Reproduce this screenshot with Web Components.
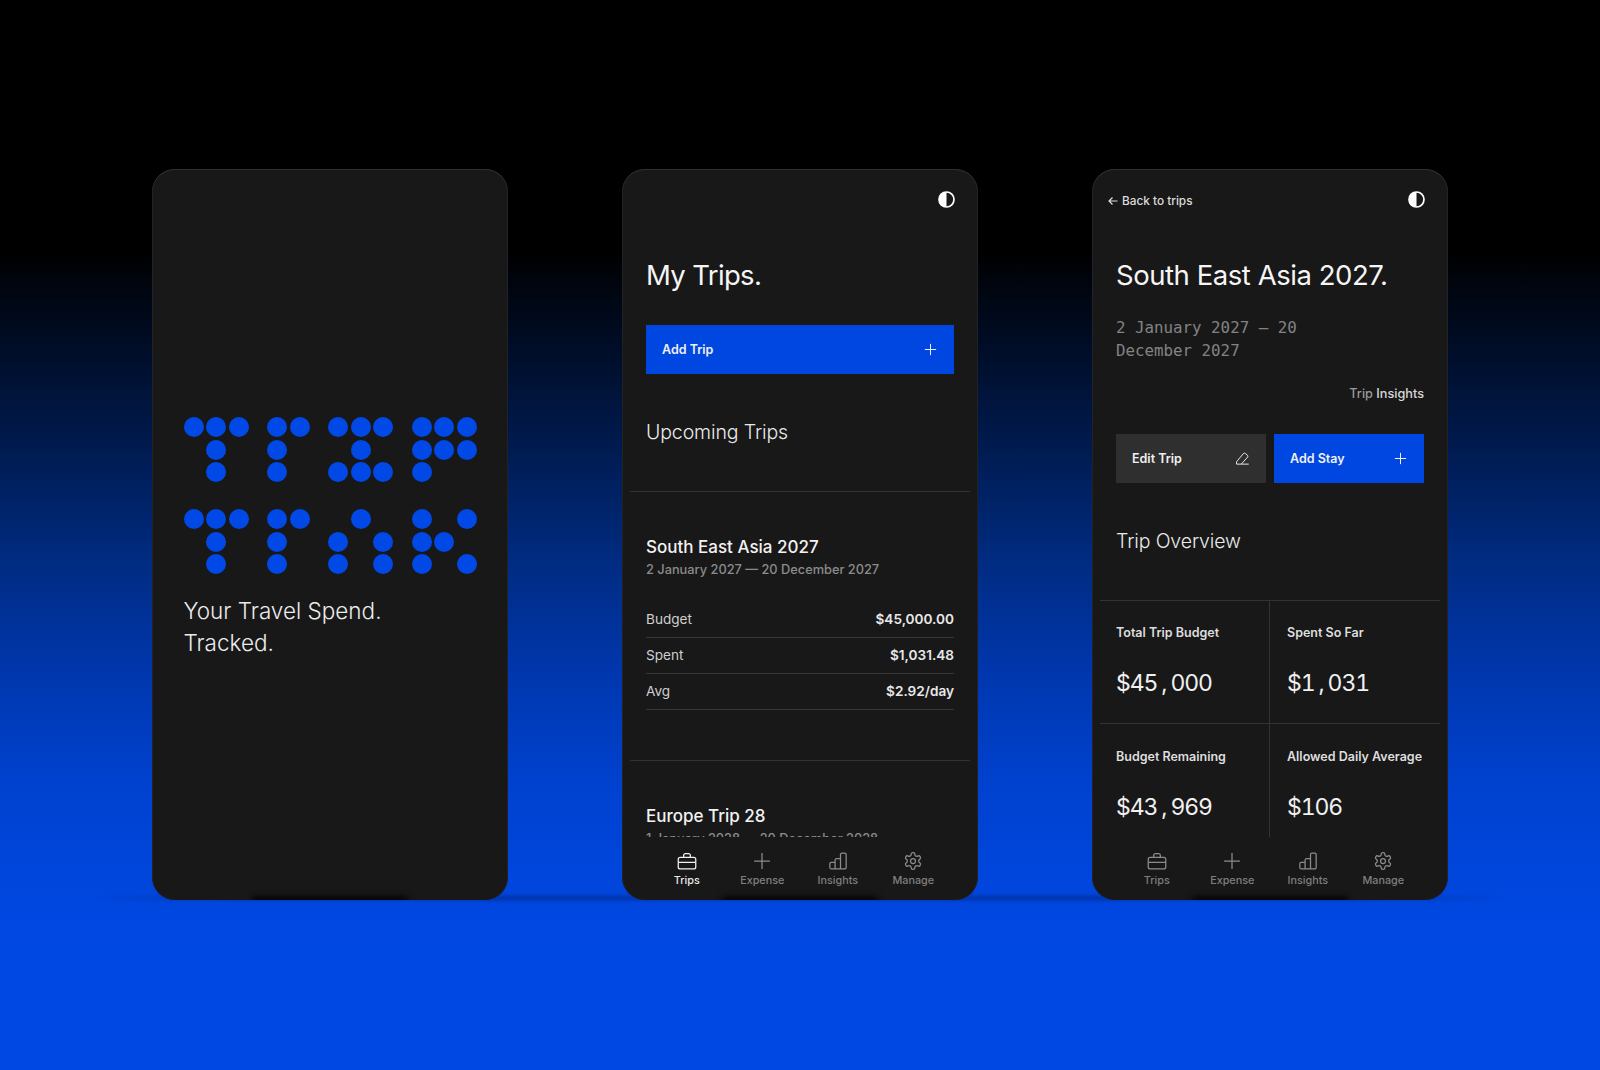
<!DOCTYPE html>
<html lang="en">
<head>
<meta charset="utf-8">
<title>Trip Trak</title>
<style>
  html, body { margin: 0; height: 100%; }
  body {
    height: 1070px;
    overflow: hidden;
    font-family: Inter, "Liberation Sans", sans-serif;
    color: #f2f2f2;
    background: linear-gradient(180deg, #000 0, #000 250px, #001a4e 444px, #002b80 559px, #0037ae 674px, #0042d0 789px, #0047e0 903px, #0048e4 1000px, #0048e4 100%);
  }
</style>
</head>
<body>
<phone-stage>
  <trip-phone>
    <splash-screen></splash-screen>
  </trip-phone>

  <trip-phone>
    <top-bar slot="top"></top-bar>
    <page-title style="letter-spacing:-.65px">My Trips.</page-title>
    <action-button full style="margin-top:33.500px">Add Trip</action-button>
    <section-title>Upcoming Trips</section-title>
    <trip-card name="South East Asia 2027" dates="2 January 2027 — 20 December 2027">
      <budget-row label="Budget" value="$45,000.00"></budget-row>
      <budget-row label="Spent" value="$1,031.48"></budget-row>
      <budget-row label="Avg" value="$2.92/day"></budget-row>
    </trip-card>
    <trip-card name="Europe Trip 28" dates="1 January 2028 — 20 December 2028"></trip-card>
    <bottom-nav slot="nav" active="Trips"></bottom-nav>
  </trip-phone>

  <trip-phone>
    <top-bar slot="top" back></top-bar>
    <page-title>South East Asia 2027.</page-title>
    <trip-dates>2 January 2027 — 20 December 2027</trip-dates>
    <insights-link></insights-link>
    <button-pair>
      <action-button variant="edit" icon="edit">Edit Trip</action-button>
      <action-button>Add Stay</action-button>
    </button-pair>
    <section-title>Trip Overview</section-title>
    <stat-grid>
      <stat-cell label="Total Trip Budget"><span>$45<i>,</i>000</span></stat-cell>
      <stat-cell label="Spent So Far"><span>$1<i>,</i>031</span></stat-cell>
      <stat-cell label="Budget Remaining"><span>$43<i>,</i>969</span></stat-cell>
      <stat-cell label="Allowed Daily Average"><span>$106</span></stat-cell>
    </stat-grid>
    <bottom-nav slot="nav"></bottom-nav>
  </trip-phone>
</phone-stage>

<script>
const ICONS = {
  Trips: `<rect x="1.500" y="7.500" width="21" height="14" rx="2.400"/><path d="M8 7.500V5.200A2 2 0 0 1 10 3.200h4a2 2 0 0 1 2 2v2.300M1.500 13.500h21"/>`,
  Expense: `<path d="M12 2.500v19M2.500 12h19"/>`,
  Insights: `<path d="M8.500 21.500H4a1.800 1.800 0 0 1-1.800-1.800v-4.400A1.800 1.800 0 0 1 4 13.500h4.500zM8.500 21.500V11a1.800 1.800 0 0 1 1.800-1.800h4.700v12.300zM15 21.500h5a1.800 1.800 0 0 0 1.800-1.800V4.300A1.800 1.800 0 0 0 20 2.500h-3.200A1.800 1.800 0 0 0 15 4.300z"/>`,
  Manage: `<path d="M12.220 2h-.44a2 2 0 0 0-2 2v.18a2 2 0 0 1-1 1.730l-.43.25a2 2 0 0 1-2 0l-.15-.08a2 2 0 0 0-2.730.73l-.22.38a2 2 0 0 0 .73 2.730l.15.1a2 2 0 0 1 1 1.720v.51a2 2 0 0 1-1 1.740l-.15.09a2 2 0 0 0-.73 2.730l.22.38a2 2 0 0 0 2.730.73l.15-.08a2 2 0 0 1 2 0l.43.25a2 2 0 0 1 1 1.730V20a2 2 0 0 0 2 2h.44a2 2 0 0 0 2-2v-.18a2 2 0 0 1 1-1.730l.43-.25a2 2 0 0 1 2 0l.15.08a2 2 0 0 0 2.730-.73l.22-.39a2 2 0 0 0-.73-2.730l-.15-.08a2 2 0 0 1-1-1.740v-.5a2 2 0 0 1 1-1.740l.15-.09a2 2 0 0 0 .73-2.730l-.22-.38a2 2 0 0 0-2.730-.73l-.15.08a2 2 0 0 1-2 0l-.43-.25a2 2 0 0 1-1-1.730V4a2 2 0 0 0-2-2z"/><circle cx="12" cy="12" r="3"/>`,
  plus: `<path d="M12 3v18M3 12h18"/>`,
  edit: `<path d="M2.500 21v-3.800L13.500 4a2 2 0 0 1 2.800-.2l3.700 3.100a2 2 0 0 1 .2 2.800L10 21zM10 21h12"/>`
};

class PhoneStage extends HTMLElement {
  constructor() {
    super();
    this.attachShadow({ mode: "open" }).innerHTML = `<style>
      :host { display: flex; justify-content: center; gap: 114px; padding-top: 169px; position: relative; }
      :host::before {
        content: ""; position: absolute; left: 90px; right: 90px; top: 896px; height: 4px;
        background: linear-gradient(90deg, transparent, rgba(0,10,50,.4) 12%, rgba(0,10,50,.4) 88%, transparent);
        filter: blur(2px);
      }
    </style><slot></slot>`;
  }
}

class TripPhone extends HTMLElement {
  constructor() {
    super();
    this.attachShadow({ mode: "open" }).innerHTML = `<style>
      :host {
        display: flex; flex-direction: column; position: relative; overflow: hidden;
        width: 356px; height: 731px; box-sizing: border-box;
        background: #181818; border-radius: 23px;
        box-shadow: inset 0 1px 0 #303030, inset 1px 0 0 #222, inset -1px 0 0 #222;
      }
      :host::after {
        content: ""; position: absolute; z-index: 2; left: 28%; right: 28%; bottom: -3px; height: 6px;
        background: #000; filter: blur(3px);
      }
      .body { flex: 1; min-height: 0; overflow: hidden; display: flex; flex-direction: column; }
    </style>
    <slot name="top"></slot>
    <div class="body"><slot></slot></div>
    <slot name="nav"></slot>`;
  }
}

class SplashScreen extends HTMLElement {
  constructor() {
    super();
    const letters = [
      [["111","010","010"], ["11","10","10"], ["111","010","111"], ["111","111","100"]],
      [["111","010","010"], ["11","10","10"], ["010","101","101"], ["101","110","101"]]
    ];
    const word = (rows) => rows.map((r) => `<div class="letter">${r.join("").split("").map((d) =>
      `<b class="${d === "1" ? "on" : ""}"></b>`).join("")}</div>`).join("");
    this.attachShadow({ mode: "open" }).innerHTML = `<style>
      :host { display: block; padding: 248px 0 0 31.500px; }
      .word { display: flex; gap: 16px; margin-bottom: 24.500px; }
      .letter { display: grid; grid-template-columns: repeat(auto-fill, 22.500px); grid-auto-rows: 22.500px; }
      .letter:nth-child(1), .letter:nth-child(3), .letter:nth-child(4) { width: 67.500px; }
      .letter:nth-child(2) { width: 45px; }
      b { display: block; width: 20px; height: 20px; border-radius: 50%; }
      b.on { background: #0049e6; }
      p { margin: -6px 0 0; font-size: 22.500px; line-height: 31.500px; font-weight: 300; color: #ececec; }
    </style>
    ${letters.map((w) => `<div class="word">${word(w)}</div>`).join("")}
    <p>Your Travel Spend.<br>Tracked.</p>`;
  }
}

class TopBar extends HTMLElement {
  constructor() {
    super();
    const back = this.hasAttribute("back");
    this.attachShadow({ mode: "open" }).innerHTML = `<style>
      :host { display: flex; align-items: center; justify-content: space-between; height: 61px; padding: 1px 23px 0 16px; flex: none; }
      a { display: flex; align-items: center; gap: 4px; font-size: 11.800px; font-weight: 500; color: #dcdcdc; }
      a svg { width: 10px; height: 10px; fill: none; stroke: #dcdcdc; stroke-width: 1.200; }
      .toggle { width: 17px; height: 17px; margin-top: -2px; }
    </style>
    ${back ? `<a><svg viewBox="0 0 10 10"><path d="M9.500 5H1M4.500 1.500 1 5l3.500 3.500"/></svg>Back to trips</a>` : `<span></span>`}
    <svg class="toggle" viewBox="0 0 17 17"><circle cx="8.500" cy="8.500" r="7.500" fill="none" stroke="#fff" stroke-width="1.700"/><path d="M8.500 1a7.500 7.500 0 0 0 0 15z" fill="#fff"/></svg>`;
  }
}

class PageTitle extends HTMLElement {
  constructor() {
    super();
    this.attachShadow({ mode: "open" }).innerHTML = `<style>
      :host { display: block; margin: 26.500px 24px 0; font-size: 27.500px; line-height: 34px; font-weight: 400; letter-spacing: -.45px; color: #f5f5f5; white-space: nowrap; flex: none; }
    </style><slot></slot>`;
  }
}

class ActionButton extends HTMLElement {
  constructor() {
    super();
    const icon = ICONS[this.getAttribute("icon")] || ICONS.plus;
    const edit = this.getAttribute("variant") === "edit";
    this.attachShadow({ mode: "open" }).innerHTML = `<style>
      :host { display: flex; align-items: center; justify-content: space-between; flex: 1; height: 49px; padding: 0 16px; box-sizing: border-box;
        background: ${edit ? "#2f2f2f" : "#0047e1"}; font-size: 12.500px; font-weight: 600; color: #f0f0f0; }
      :host([full]) { margin: 0 24px; flex: none; }
      svg { width: 15px; height: 15px; fill: none; stroke: #f2f2f2; stroke-width: ${edit ? 1.500 : 1.600}; stroke-linejoin: round; }
    </style><slot></slot><svg viewBox="0 0 24 24">${icon}</svg>`;
  }
}

class SectionTitle extends HTMLElement {
  constructor() {
    super();
    this.attachShadow({ mode: "open" }).innerHTML = `<style>
      :host { display: block; margin: 46px 24px 47px; font-size: 19.500px; line-height: 24px; font-weight: 300; letter-spacing: -.12px; color: #eaeaea; flex: none; }
    </style><slot></slot>`;
  }
}

class TripCard extends HTMLElement {
  constructor() {
    super();
    this.attachShadow({ mode: "open" }).innerHTML = `<style>
      :host { display: block; margin: 0 8px; padding: 43px 16px 50px; border-top: 1px solid #333; flex: none; }
      h3 { margin: 0; font-size: 17px; line-height: 24px; font-weight: 500; color: #f2f2f2; }
      p { margin: 1px 0 22px; font-size: 12.800px; line-height: 20px; font-weight: 500; color: #8b8b8b; }
    </style>
    <h3>${this.getAttribute("name")}</h3>
    <p>${this.getAttribute("dates")}</p>
    <slot></slot>`;
  }
}

class BudgetRow extends HTMLElement {
  constructor() {
    super();
    this.attachShadow({ mode: "open" }).innerHTML = `<style>
      :host { display: flex; justify-content: space-between; align-items: center; height: 36px; box-sizing: border-box; padding-bottom: 1px; border-bottom: 1px solid #383838; font-size: 13.600px; color: #cfcfcf; }
      b { font-weight: 600; color: #e8e8e8; }
    </style><span>${this.getAttribute("label")}</span><b>${this.getAttribute("value")}</b>`;
  }
}

class TripDates extends HTMLElement {
  constructor() {
    super();
    this.attachShadow({ mode: "open" }).innerHTML = `<style>
      :host { display: block; margin: 25.500px 24px 0; width: 200px; font-family: "DejaVu Sans Mono", "Liberation Mono", monospace; font-size: 15.800px; line-height: 22.500px; font-weight: 400; color: #838383; flex: none; }
    </style><slot></slot>`;
  }
}

class InsightsLink extends HTMLElement {
  constructor() {
    super();
    this.attachShadow({ mode: "open" }).innerHTML = `<style>
      :host { display: block; margin: 22px 24px 30px; text-align: right; font-size: 12.700px; font-weight: 500; line-height: 20px; color: #9a9a9a; flex: none; }
      span { color: #d8d8d8; }
    </style>Trip <span>Insights</span>`;
  }
}

class ButtonPair extends HTMLElement {
  constructor() {
    super();
    this.attachShadow({ mode: "open" }).innerHTML = `<style>
      :host { display: flex; gap: 8px; margin: 0 24px; flex: none; }
    </style><slot></slot>`;
  }
}

class StatGrid extends HTMLElement {
  constructor() {
    super();
    this.attachShadow({ mode: "open" }).innerHTML = `<style>
      :host { display: grid; grid-template-columns: 170px 170px; margin: 0 8px; border-top: 1px solid #333; flex: none; }
    </style><slot></slot>`;
  }
}

class StatCell extends HTMLElement {
  constructor() {
    super();
    this.attachShadow({ mode: "open" }).innerHTML = `<style>
      :host { display: block; height: 123px; box-sizing: border-box; padding: 22px 0 0 16px; white-space: nowrap; }
      :host(:nth-child(odd)) { border-right: 1px solid #333; }
      :host(:nth-child(even)) { padding-left: 17px; }
      :host(:nth-child(-n+2)) { border-bottom: 1px solid #333; }
      :host(:nth-child(n+3)) { padding-top: 23px; }
      p { margin: 0; font-size: 12.500px; line-height: 20px; font-weight: 600; color: #dedede; }
      div { margin-top: 23px; font-size: 23px; line-height: 34px; font-weight: 400; color: #f0f0f0; font-feature-settings: "tnum"; letter-spacing: -1.100px; }
    </style><p>${this.getAttribute("label")}</p><div><slot></slot></div>`;
    // commas in the amounts sit in a wider cell than the digits
    this.querySelectorAll("i").forEach((c) => {
      c.style.cssText = "font-style:normal;margin:0 4px 0 4px";
    });
  }
}

class BottomNav extends HTMLElement {
  constructor() {
    super();
    const active = this.getAttribute("active");
    this.attachShadow({ mode: "open" }).innerHTML = `<style>
      :host { display: grid; grid-template-columns: repeat(4, 75.500px); justify-content: center; height: 63px; flex: none; position: relative; z-index: 1; }
      div { display: flex; flex-direction: column; align-items: center; padding-top: 14px; font-size: 10.800px; line-height: 16px; font-weight: 500; color: #7f7f7f; }
      div.on { color: #e8e8e8; }
      svg { width: 20px; height: 20px; margin-bottom: 2px; fill: none; stroke: #8c8c8c; stroke-width: 1.500; }
      div.on svg { stroke: #f0f0f0; }
    </style>
    ${["Trips", "Expense", "Insights", "Manage"].map((n) =>
      `<div class="${n === active ? "on" : ""}"><svg viewBox="0 0 24 24">${ICONS[n]}</svg>${n}</div>`).join("")}`;
  }
}

customElements.define("phone-stage", PhoneStage);
customElements.define("trip-phone", TripPhone);
customElements.define("splash-screen", SplashScreen);
customElements.define("top-bar", TopBar);
customElements.define("page-title", PageTitle);
customElements.define("action-button", ActionButton);
customElements.define("section-title", SectionTitle);
customElements.define("trip-card", TripCard);
customElements.define("budget-row", BudgetRow);
customElements.define("trip-dates", TripDates);
customElements.define("insights-link", InsightsLink);
customElements.define("button-pair", ButtonPair);
customElements.define("stat-grid", StatGrid);
customElements.define("stat-cell", StatCell);
customElements.define("bottom-nav", BottomNav);
</script>
</body>
</html>
